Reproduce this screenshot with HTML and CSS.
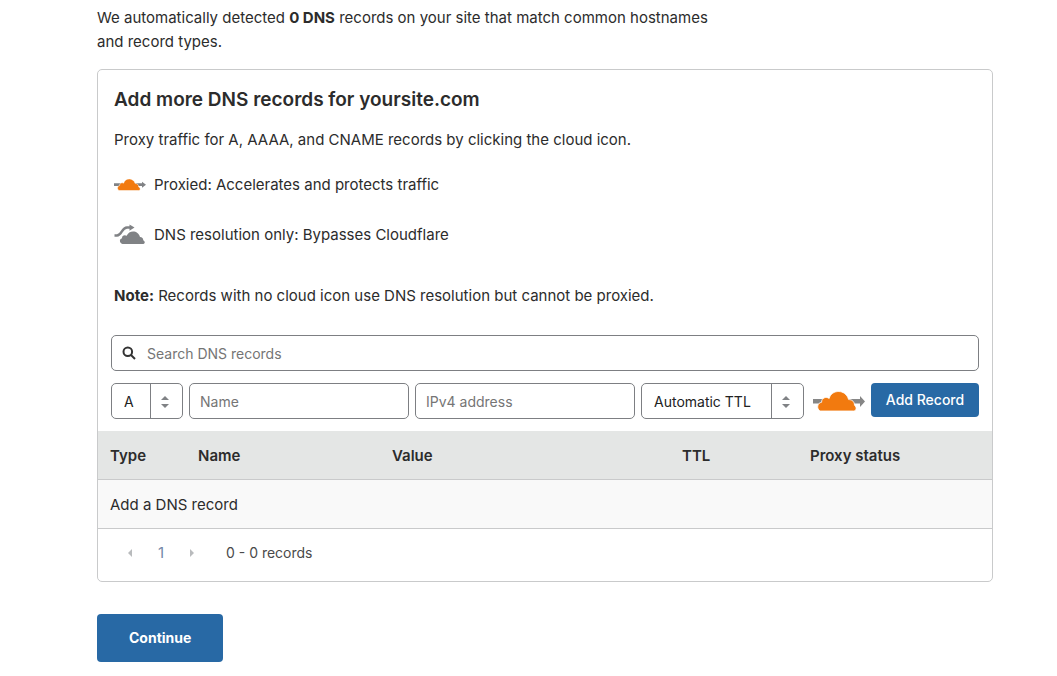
FILE: index.html
```html
<!DOCTYPE html>
<html lang="en">
<head>
<meta charset="utf-8">
<meta name="viewport" content="width=device-width, initial-scale=1">
<title>DNS records</title>
<link rel="stylesheet" href="styles.css">
</head>
<body>
<main class="page">
  <p class="intro">We automatically detected <strong>0 DNS</strong> records on your site that match common hostnames and record types.</p>

  <section class="card">
    <div class="about">
      <h2 class="title">Add more DNS records for yoursite.com</h2>
      <p class="lead">Proxy traffic for A, AAAA, and CNAME records by clicking the cloud icon.</p>
      <ul class="legend">
        <li class="legend-item">
          <svg class="legend-icon" viewBox="0 0 32 20" aria-hidden="true">
            <path fill="#808285" d="M0 8.200h28V6.700l4 3-4 3v-1.700H0z"/>
            <path fill="#f27a0f" stroke="#fff" stroke-width=".5" d="M5 15.500C2.700 14.500 3.200 11 5.600 10.500 5.300 8.200 7.800 7 9.600 8.200 11 2.500 19.500 2.300 21.200 8.500 23.500 8.400 25 10.200 24.700 12 27 13.200 26.500 15.500 24.500 15.500z"/>
          </svg>
          Proxied: Accelerates and protects traffic
        </li>
        <li class="legend-item">
          <svg class="legend-icon" viewBox="0 0 32 20" aria-hidden="true">
            <path fill="none" stroke="#808285" stroke-width="2.400" d="M.5 10.500H3C8 10.500 7.500 2.500 13 2.500h4"/>
            <path fill="#808285" d="M15.500-.5l5 3-5 3.200z"/>
            <path fill="#808285" d="M8.500 19C5.300 18 5 14 8 13.200 7.800 10.700 10.500 9.500 12.700 10.800 15 4.500 24.500 5 26 12 28 12 29.500 13.400 29.200 15.200 31.700 16.500 31 19 28.500 19z"/>
          </svg>
          DNS resolution only: Bypasses Cloudflare
        </li>
      </ul>
      <p class="note"><strong>Note:</strong> Records with no cloud icon use DNS resolution but cannot be proxied.</p>
    </div>

    <form class="tools">
      <label class="search">
        <svg class="search-icon" viewBox="0 0 14 14" aria-hidden="true"><circle cx="5.800" cy="5.800" r="4.300"/><path d="M9 9l4 4"/></svg>
        <input class="field search-field" type="text" placeholder="Search DNS records" aria-label="Search DNS records">
      </label>
      <div class="record">
        <span class="picker picker-type">
          <select class="field select" aria-label="Type"><option>A</option></select>
          <svg class="arrows" viewBox="0 0 8 12" aria-hidden="true"><path d="M0 4l4-4 4 4zM0 8h8l-4 4z"/></svg>
        </span>
        <input class="field record-field" type="text" placeholder="Name" aria-label="Name">
        <input class="field record-field" type="text" placeholder="IPv4 address" aria-label="IPv4 address">
        <span class="picker picker-ttl">
          <select class="field select" aria-label="TTL"><option>Automatic TTL</option></select>
          <svg class="arrows" viewBox="0 0 8 12" aria-hidden="true"><path d="M0 4l4-4 4 4zM0 8h8l-4 4z"/></svg>
        </span>
        <button class="proxy" type="button" aria-label="Proxied">
          <svg class="proxy-icon" viewBox="0 0 52 20" aria-hidden="true">
            <path fill="#868686" d="M0 8h47V5l5 5.500-5 5.500v-3.500H0z"/>
            <path fill="#f27a0f" stroke="#fff" stroke-width=".8" d="M7 20C3.500 18 4 11.800 8.600 11.300 8.300 7.200 13 5 16.200 7.500 18.500-2 33-2 35.600 8.600 39.500 8.400 41.700 11.300 41.400 14.200 44.500 16.500 43 20 40.500 20z"/>
          </svg>
        </button>
        <button class="button add" type="button">Add Record</button>
      </div>
    </form>

    <table class="records">
      <colgroup><col class="col-type"><col class="col-name"><col><col class="col-ttl"><col class="col-status"></colgroup>
      <thead><tr><th>Type</th><th>Name</th><th>Value</th><th>TTL</th><th>Proxy status</th></tr></thead>
      <tbody><tr><td colspan="5">Add a DNS record</td></tr></tbody>
    </table>

    <nav class="pager" aria-label="Pages">
      <button class="step" type="button" aria-label="Previous"><svg class="step-icon" viewBox="0 0 4 8"><path d="M4 0v8L0 4z"/></svg></button>
      <span class="current">1</span>
      <button class="step" type="button" aria-label="Next"><svg class="step-icon" viewBox="0 0 4 8"><path d="M0 0v8l4-4z"/></svg></button>
      <span class="count">0 - 0 records</span>
    </nav>
  </section>

  <button class="button continue" type="button">Continue</button>
</main>
</body>
</html>
```
FILE: styles.css
```css
* { box-sizing: border-box; }
body {
  margin: 0;
  background: #fff;
  color: #2c2c2c;
  font: 15px/24px Inter, "Liberation Sans", sans-serif;
}
p, h2, ul { margin: 0; padding: 0; }
input, select, button { font: inherit; color: inherit; }

.page { padding: 6px 64px 14px 97px; }
.intro { max-width: 640px; margin-bottom: 15px; }

.card { border: 1px solid #c9cacb; border-radius: 5px; overflow: hidden; }
.about { padding: 17px 16px 27px; }
.title { font-size: 19px; line-height: 26px; font-weight: 600; margin-bottom: 15px; }
.legend { list-style: none; margin: 21px 0 37px; display: grid; gap: 26px; }
.legend-item { display: flex; align-items: center; gap: 8px; }
.legend-icon { width: 32px; height: 20px; overflow: visible; }

.tools { display: grid; gap: 12px; padding: 0 13px 12px; }
.field {
  width: 100%;
  height: 36px;
  border: 1px solid #7d7f83;
  border-radius: 5px;
  background: #fff;
  padding: 0 10px;
  font-size: 14px;
}
.field::placeholder { color: #757575; opacity: 1; }
.search { position: relative; display: block; }
.search-field { display: block; padding-left: 35px; }
.search-icon {
  position: absolute;
  left: 11px;
  top: 11px;
  width: 14px;
  height: 14px;
  fill: none;
  stroke: #333;
  stroke-width: 2;
}
.record { display: flex; gap: 6px; }
.record-field { flex: 1; min-width: 0; }
.picker { position: relative; }
.picker-type { width: 72px; }
.picker-ttl { width: 163px; }
.select { appearance: none; padding: 1px 32px 0 12px; display: block; color: #222; }
.picker::after {
  content: "";
  position: absolute;
  top: 1px;
  bottom: 1px;
  right: 32px;
  width: 1px;
  background: #7d7f83;
}
.arrows { position: absolute; right: 14px; top: 13px; width: 8px; height: 12px; fill: #808285; pointer-events: none; }
.proxy { border: 0; background: none; padding: 0; margin-left: 3px; width: 52px; height: 36px; }
.proxy-icon { display: block; width: 52px; height: 20px; overflow: visible; }
.button { border: 0; border-radius: 4px; background: #2869a5; color: #fff; }
.add { width: 108px; height: 34px; padding: 0; font-size: 14px; font-weight: 500; }

.records { width: 100%; border-collapse: separate; border-spacing: 0; table-layout: fixed; text-align: left; }
.records th { background: #e4e6e5; font-weight: 600; }
.records td { background: #f9f9f9; }
.records th, .records td { height: 49px; padding: 1px 12px 0; border-bottom: 1px solid #c9cacb; }
.col-type { width: 88px; }
.col-name { width: 194px; }
.col-ttl { width: 128px; }
.col-status { width: 194px; }

.pager { display: flex; align-items: center; padding: 12px 16px 16px; }
.step { width: 32px; height: 24px; padding: 0; border: 0; background: none; display: grid; place-items: center; }
.step-icon { width: 4px; height: 8px; fill: #b9bbbd; }
.current { width: 30px; text-align: center; color: #7487a8; }
.count { margin-left: 18px; font-size: 14px; color: #4a4a4a; }

.continue { display: block; margin-top: 32px; height: 48px; padding: 0 32px; font-size: 14px; font-weight: 700; }
```
